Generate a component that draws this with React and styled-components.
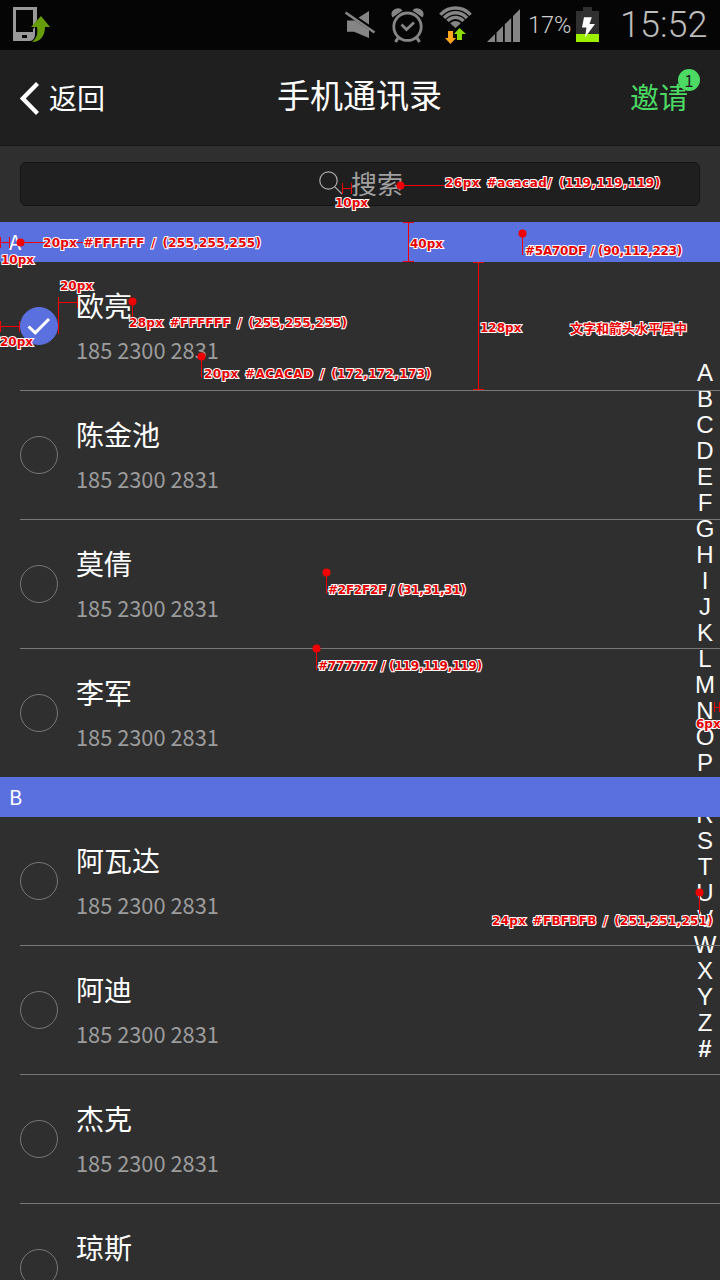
import React from "react";
import styled, { createGlobalStyle, css } from "styled-components";

const Global = createGlobalStyle`
  *, *::before, *::after { box-sizing: border-box; }
  html, body { margin: 0; padding: 0; background: #2f2f2f; }
  body { overflow: hidden; }
`;

const cjk = `"Noto Sans CJK SC", "Noto Sans", sans-serif`;

const Screen = styled.main`
  position: relative;
  display: flex;
  flex-direction: column;
  width: 720px;
  height: 1280px;
  overflow: hidden;
  background: #2f2f2f;
  color: #fff;
  font-family: ${cjk};
`;

const StatusBar = styled.div`
  display: flex;
  align-items: center;
  justify-content: space-between;
  flex: none;
  height: 50px;
  padding: 0 12px 0 13px;
  background: #050505;
  font-family: Roboto, sans-serif;
`;

const StatusGroup = styled.div`
  display: flex;
  align-items: center;
  height: 50px;
  svg { display: block; flex: none; }
`;

const Percent = styled.span`
  width: 49px;
  padding-left: 7px;
  font-size: 23.5px;
  font-weight: 300;
  line-height: 52px;
  color: #d0d0d0;
  white-space: nowrap;
`;

const Clock = styled.time`
  width: 88px;
  margin-left: 21px;
  font-size: 36px;
  font-weight: 300;
  line-height: 50px;
  color: #bcbcbc;
  white-space: nowrap;
`;

const NavBar = styled.header`
  display: grid;
  grid-template-columns: 1fr auto 1fr;
  align-items: center;
  flex: none;
  height: 96px;
  padding: 0 32px 0 20px;
  background: #1f1f1f;
  border-bottom: 1px solid #161616;
`;

const BackButton = styled.a`
  display: flex;
  align-items: center;
  gap: 9px;
  padding-top: 2px;
  font-size: 28px;
  line-height: 42px;
`;

const BackLabel = styled.span`
  padding-bottom: 4px;
`;

const Title = styled.h1`
  margin: 0;
  padding: 0 0 7px 11px;
  font-size: 33px;
  font-weight: 400;
  line-height: 48px;
`;

const Invite = styled.a`
  position: relative;
  justify-self: end;
  margin-bottom: 4px;
  font-size: 29px;
  line-height: 42px;
  color: #4cd964;
`;

const Badge = styled.span`
  position: absolute;
  top: -6px;
  right: -12px;
  width: 22px;
  height: 22px;
  border-radius: 50%;
  background: #4cd964;
  color: #1f1f1f;
  font-size: 17px;
  font-weight: 400;
  line-height: 22px;
  text-align: center;
`;

const SearchArea = styled.div`
  flex: none;
  padding: 16px 20px;
`;

const SearchBox = styled.div`
  display: flex;
  align-items: center;
  justify-content: center;
  gap: 8px;
  height: 44px;
  padding: 0 0 2px 2px;
  border: 1px solid #151515;
  border-radius: 6px;
  background: #1f1f1f;
  color: #a0a0a1;
  font-size: 26px;
  font-weight: 400;
  line-height: 42px;
`;

const List = styled.div`
  position: relative;
  z-index: 1;
  flex: none;
`;

const SectionHeader = styled.div`
  height: 40px;
  padding-left: 9px;
  background: #5a70df;
  font-size: 20px;
  font-weight: 400;
  line-height: 40px;
`;

const Row = styled.div`
  display: flex;
  align-items: center;
  gap: 18px;
  height: ${(p) => (p.$last ? "128px" : "129px")};
  margin-left: 20px;
  border-bottom: ${(p) => (p.$last ? "none" : "1px solid #777")};
`;

const Radio = styled.span`
  display: flex;
  align-items: center;
  justify-content: center;
  flex: none;
  width: 38px;
  height: 38px;
  border-radius: 50%;
  border: 1px solid #777;
  ${(p) => p.$checked && css`
    border-color: #5a70df;
    background: #5a70df;
  `}
`;

const Details = styled.div`
  display: flex;
  flex-direction: column;
  gap: 5px;
  padding-top: 2px;
`;

const Name = styled.span`
  font-size: 28px;
  line-height: 40px;
`;

const Phone = styled.span`
  font-size: 21.8px;
  font-weight: 400;
  line-height: 40px;
  color: #9c9c9d;
`;

const LetterIndex = styled.nav`
  position: absolute;
  top: 360px;
  right: 0;
  display: flex;
  flex-direction: column;
  align-items: center;
  width: 30px;
  font-family: "Liberation Sans", sans-serif;
  font-size: 24px;
  color: #fbfbfb;
`;

const Letter = styled.span`
  height: 26px;
  line-height: 25px;
  font-weight: ${(p) => (p.$bold ? 700 : 400)};
`;

const Notes = styled.div`
  position: absolute;
  inset: 0;
  z-index: 2;
  overflow: hidden;
  svg { display: block; }
`;

const Note = styled.span`
  position: absolute;
  left: ${(p) => p.$x}px;
  top: ${(p) => p.$y - 8}px;
  font-family: "DejaVu Sans", "Noto Sans CJK SC", sans-serif;
  font-size: ${(p) => p.$size || 12}px;
  font-weight: 700;
  line-height: 16px;
  letter-spacing: ${(p) => p.$track || 0}px;
  word-spacing: ${(p) => p.$gap || 0}px;
  white-space: nowrap;
  color: #e60000;
  -webkit-text-stroke: 2px #fff;
  paint-order: stroke fill;
`;

const PhoneUpload = () => (
  <svg width="37" height="36" viewBox="0 0 37 36">
    <path d="M0 0h24v13l-4 6V3H3v22h17v-3l2-2v7c0 4-2 7-5 7H0z" fill="#999" />
    <path d="M9 28h5v3H9z" fill="#050505" />
    <path d="M28 9l9 11h-5c0 9-5 15-13 15 5-4 6-8 5-15h-6z" fill="#669c08" />
  </svg>
);

const Muted = () => (
  <svg width="32" height="32" viewBox="0 0 32 32">
    <path d="M2 11.500h7L24 2v27L9 22.700H2z" fill="#858585" />
    <path d="M-1 1.500L31 23" stroke="#050505" strokeWidth="4.500" />
    <path d="M.5 3.500l29 20" stroke="#858585" strokeWidth="2.600" />
  </svg>
);

const Alarm = () => (
  <svg width="34" height="36" viewBox="0 0 34 36" fill="none" stroke="#858585">
    <circle cx="16.500" cy="19.700" r="13.700" strokeWidth="2.800" />
    <path d="M10.500 17.500l5 5 7.500-7" strokeWidth="2.800" />
    <path d="M1.500 10.500Q-1.500 5 4 2q5-2 7.500 1.500zM31.500 10.500Q34.500 5 29 2q-5-2-7.500 1.500z" fill="#858585" stroke="none" />
    <path d="M7 31l-2.500 4M26 31l2.500 4" strokeWidth="3.200" />
  </svg>
);

const Wifi = () => (
  <svg width="34" height="38" viewBox="0 0 34 38">
    <clipPath id="wifiWedge">
      <path d="M16.500 22L-3.500 4.500V-6h40V4.500z" />
    </clipPath>
    <g clipPath="url(#wifiWedge)" fill="none" stroke="#858585" strokeWidth="3.400">
      <circle cx="16.500" cy="22" r="20" />
      <circle cx="16.500" cy="22" r="15.200" />
      <circle cx="16.500" cy="22" r="10.600" />
      <circle cx="16.500" cy="22" r="7" fill="#858585" stroke="none" />
    </g>
    <path d="M9 25h5v7h3l-5.500 6L6 32h3z" fill="#ffa51e" />
    <path d="M18 34h5v-6h4l-6.500-6L15 28h3z" fill="#8cdc00" />
  </svg>
);

const Signal = () => (
  <svg width="34" height="33" viewBox="0 0 34 33" fill="#858585">
    <path d="M0 33l8-8v8zM9.500 23.500l6.500-6.500v16H9.500zM17.800 15.200l6.400-6.200v24h-6.400zM26 7l7-7v33h-7z" />
  </svg>
);

const Battery = () => (
  <svg width="23" height="36" viewBox="0 0 23 36">
    <path d="M7 0h9v4h7v23H0V4h7z" fill="#303030" />
    <path d="M0 27h23v8H0z" fill="#9df000" />
    <path d="M8 10.300h7.800L13.500 17H19L9 30.500l1.500-10H6z" fill="#fff" />
  </svg>
);

const Gap = styled.span`
  width: ${(p) => p.$w}px;
`;

const BackChevron = () => (
  <svg width="20" height="34" viewBox="0 0 20 34" fill="none" stroke="#fff" strokeWidth="4.200">
    <path d="M17.500 1.500L2.800 16.500l14.700 15" />
  </svg>
);

const SearchGlyph = () => (
  <svg width="24" height="24" viewBox="0 0 24 24" fill="none" stroke="#acacad" strokeWidth="1.200">
    <circle cx="9.500" cy="9.500" r="8.700" />
    <path d="M15.800 15.800L23 23" />
  </svg>
);

const Check = () => (
  <svg width="24" height="20" viewBox="0 0 24 20" fill="none" stroke="#fff" strokeWidth="3">
    <path d="M1.500 10.500l6.800 6.300L22 3" />
  </svg>
);

const Guides = () => (
  <svg width="720" height="1280" viewBox="0 0 720 1280">
    <g fill="none" stroke="#f00000" strokeWidth="1">
      <path d="M400 185.500H445M342.500 183v11M351.500 183v11M342 188.500h9" />
      <path d="M.5 237v11M9.500 237v11M0 242.500h9M20 242.500h64" />
      <path d="M408.500 222v40M403 222.500h11M403 261.500h11" />
      <path d="M522.500 234v21M58.500 297v37M58 302.500h20M77.500 297v11" />
      <path d="M132.500 302v17M.5 321v11M19.500 321v11M0 326.500h20" />
      <path d="M201.500 357v21M478.500 262v128M473 262.500h11M473 389.500h11" />
      <path d="M326.500 573v21M316.500 649v21M714.500 702v10M719.500 702v10M714 707.500h6M699.500 892v22" />
    </g>
    <g fill="#f00000">
      {[[400.5, 185.5], [20.5, 242.5], [522.5, 233.5], [132.5, 301.5], [201.5, 356.5], [326.5, 572.5], [316.5, 648.5], [699.5, 892.5]].map(([x, y]) => (
        <circle key={`${x}-${y}`} cx={x} cy={y} r="4" />
      ))}
    </g>
  </svg>
);

const notes = [
  { x: 445, y: 183, gap: 2, track: 0.5, text: "26px #acacad/ (119,119,119)" },
  { x: 335, y: 203, text: "10px" },
  { x: 43, y: 243, gap: 2, track: 0.28, text: "20px #FFFFFF / (255,255,255)" },
  { x: 1, y: 260, text: "10px" },
  { x: 410, y: 244, text: "40px" },
  { x: 525, y: 251, track: -0.23, text: "#5A70DF / (90,112,223)" },
  { x: 60, y: 286, text: "20px" },
  { x: 129, y: 323, gap: 2, track: 0.28, text: "28px #FFFFFF / (255,255,255)" },
  { x: 0, y: 342, text: "20px" },
  { x: 480, y: 328, text: "128px" },
  { x: 570, y: 329, size: 13, text: "文字和箭头水平居中" },
  { x: 204, y: 374, gap: 2, track: 0.38, text: "20px #ACACAD / (172,172,173)" },
  { x: 328, y: 590, track: -0.25, text: "#2F2F2F / (31,31,31)" },
  { x: 318, y: 666, track: -0.18, text: "#777777 / (119,119,119)" },
  { x: 492, y: 921, gap: 2, track: 0.28, text: "24px #FBFBFB / (251,251,251)" },
  { x: 696, y: 724, text: "6px" },
];

const sections = [
  { letter: "A", people: ["欧亮", "陈金池", "莫倩", "李军"], selected: "欧亮" },
  { letter: "B", people: ["阿瓦达", "阿迪", "杰克", "琼斯"] },
];

const Contact = ({ name, checked, last }) => (
  <Row $last={last}>
    <Radio $checked={checked}>{checked && <Check />}</Radio>
    <Details>
      <Name>{name}</Name>
      <Phone>185 2300 2831</Phone>
    </Details>
  </Row>
);

export default function App() {
  return (
    <Screen>
      <Global />
      <StatusBar>
        <PhoneUpload />
        <StatusGroup>
          <Muted />
          <Gap $w={14} />
          <Alarm />
          <Gap $w={14} />
          <Wifi />
          <Gap $w={14} />
          <Signal />
          <Percent>17%</Percent>
          <Gap $w={6} />
          <Battery />
          <Clock>15:52</Clock>
        </StatusGroup>
      </StatusBar>
      <NavBar>
        <BackButton><BackChevron /><BackLabel>返回</BackLabel></BackButton>
        <Title>手机通讯录</Title>
        <Invite>邀请<Badge>1</Badge></Invite>
      </NavBar>
      <SearchArea>
        <SearchBox><SearchGlyph />搜索</SearchBox>
      </SearchArea>
      <List>
        {sections.map((s) => (
          <section key={s.letter}>
            <SectionHeader>{s.letter}</SectionHeader>
            {s.people.map((name, i) => (
              <Contact key={name} name={name} checked={name === s.selected} last={i === s.people.length - 1} />
            ))}
          </section>
        ))}
      </List>
      <LetterIndex>
        {[..."ABCDEFGHIJKLMNOPQRSTUVWXYZ#"].map((c) => <Letter key={c} $bold={c === "#"}>{c}</Letter>)}
      </LetterIndex>
      <Notes>
        <Guides />
        {notes.map((n) => (
          <Note key={`${n.x}-${n.y}`} $x={n.x} $y={n.y} $size={n.size} $track={n.track} $gap={n.gap}>{n.text}</Note>
        ))}
      </Notes>
    </Screen>
  );
}
